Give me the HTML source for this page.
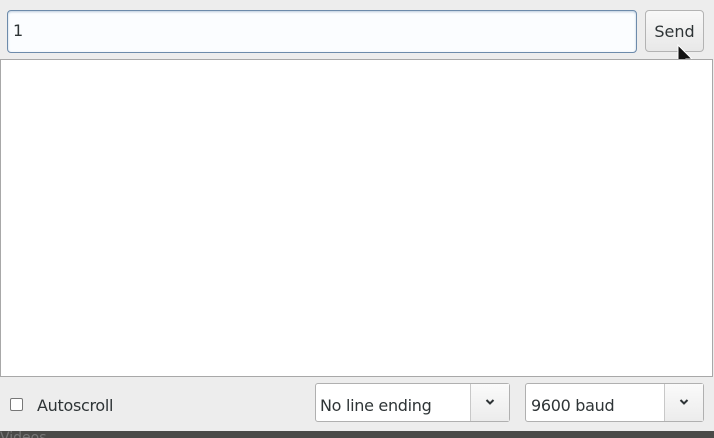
<!DOCTYPE html>
<html><head><style>
body{margin:0;width:714px;height:438px;background:#ededed;position:relative;overflow:hidden;font-family:"DejaVu Sans","Liberation Sans",sans-serif;color:#2e3436}
.a{position:absolute;box-sizing:border-box}
</style></head><body>
<div class="a" style="left:7px;top:10px;width:630px;height:43px;border:1px solid #6d8bab;border-radius:4px;background:#fbfdff;box-shadow:inset 0 1px 2px #bcd"></div>
<div class="a" style="left:13px;top:21px;font-size:16px">1</div>
<div class="a" style="left:645px;top:10px;width:59px;height:42px;border:1px solid #b3b3b3;border-radius:4px;background:linear-gradient(#f8f8f8,#e8e8e8);font-size:16px;text-align:center;line-height:42px">Send</div>
<svg class="a" style="left:677px;top:44px" width="18" height="30" viewBox="0 0 18 30"><path d="M1 1 L1 21 L6 16 L9 25 L12 24 L9 15 L15 15 Z" fill="#111" stroke="#fff" stroke-width="1"/></svg>
<div class="a" style="left:0;top:59px;width:713px;height:318px;border:1px solid #a8a8a8;background:#fff"></div>
<div class="a" style="left:10px;top:398px;width:13px;height:13px;border:1px solid #777;background:#fff;border-radius:2px"></div>
<div class="a" style="left:37px;top:396px;font-size:16px;letter-spacing:-0.3px">Autoscroll</div>
<div class="a" style="left:315px;top:383px;width:195px;height:39px;border:1px solid #b0b0b0;border-radius:3px;background:#fff"></div>
<div class="a" style="left:470px;top:384px;width:39px;height:37px;border-left:1px solid #c8c8c8;background:linear-gradient(#fafafa,#ececec)"><svg style="position:absolute;left:14px;top:14px" width="10" height="8" viewBox="0 0 10 8"><path d="M1.5 2 L5 5.5 L8.5 2" fill="none" stroke="#2e3436" stroke-width="2"/></svg></div>
<div class="a" style="left:320px;top:396px;font-size:16px;letter-spacing:-0.3px">No line ending</div>
<div class="a" style="left:525px;top:383px;width:179px;height:39px;border:1px solid #b0b0b0;border-radius:3px;background:#fff"></div>
<div class="a" style="left:664px;top:384px;width:39px;height:37px;border-left:1px solid #c8c8c8;background:linear-gradient(#fafafa,#ececec)"><svg style="position:absolute;left:14px;top:14px" width="10" height="8" viewBox="0 0 10 8"><path d="M1.5 2 L5 5.5 L8.5 2" fill="none" stroke="#2e3436" stroke-width="2"/></svg></div>
<div class="a" style="left:531px;top:396px;font-size:16px;letter-spacing:-0.3px">9600 baud</div>
<div class="a" style="left:0;top:431px;width:714px;height:7px;background:#4a4a48"></div>
<div class="a" style="left:0;top:428px;font-size:14px;color:#777;height:10px;overflow:hidden;line-height:20px">Videos</div>
</body></html>
